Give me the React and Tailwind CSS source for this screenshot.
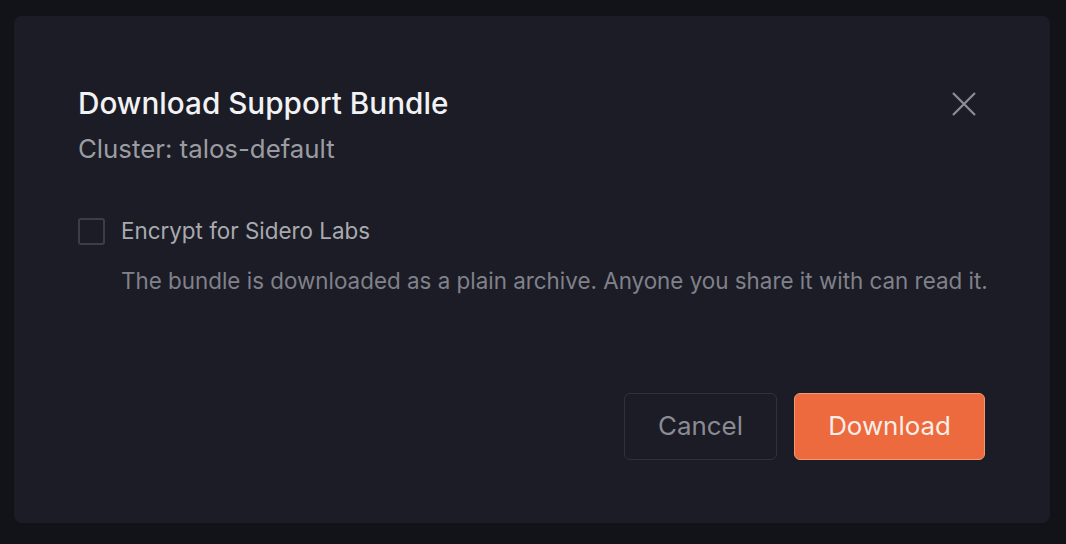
import React, { useState } from 'react';

const App = () => {
  const [encrypt, setEncrypt] = useState(false);

  return (
    <div
      className="w-[1066px] h-[544px] bg-[#121319] pt-[16px] pl-[14px] pr-[16px] pb-[21px]"
      style={{ fontFamily: 'Inter, "Noto Sans", sans-serif' }}
    >
      <div className="h-full rounded-[8px] bg-[#1b1c25] pl-[64px] pr-[64px] pt-[69px] flex flex-col">
        {/* Header */}
        <div className="flex items-start justify-between">
          <div className="flex flex-col">
            <h2 className="text-[29.7px] leading-[36px] font-medium text-[#f2f2f4]">Download Support Bundle</h2>
            <p className="text-[25.8px] leading-[32px] text-[#9b9ca3] mt-[12px]">Cluster: talos-default</p>
          </div>
          <button className="mt-[7px] mr-[10px] w-[24px] h-[24px] text-[#8d8e95]">
            <svg width="24" height="24" viewBox="0 0 24 24" fill="none" stroke="currentColor" strokeWidth="2.2">
              <path d="M1 1L23 23M23 1L1 23" />
            </svg>
          </button>
        </div>

        {/* Option */}
        <div className="mt-[52px] flex items-center gap-[16px]">
          <button
            onClick={() => setEncrypt(!encrypt)}
            className="w-[27px] h-[27px] rounded-[3px] border-[2px] border-[#3c3d46] bg-transparent"
          />
          <span className="text-[22.4px] leading-[28px] text-[#a9aab0]">Encrypt for Sidero Labs</span>
        </div>
        <p className="ml-[43px] mt-[21px] whitespace-nowrap text-[22.4px] leading-[30px] text-[#80818a]">
          The bundle is downloaded as a plain archive. Anyone you share it with can read it.
        </p>

        {/* Actions */}
        <div className="mt-[97px] flex justify-end gap-[17px] pr-[1px]">
          <button className="w-[153px] h-[67px] rounded-[6px] border border-[#30313a] text-[25.9px] text-[#8a8b93]">
            Cancel
          </button>
          <button className="w-[191px] h-[67px] rounded-[6px] border border-[#f39a73] bg-[#ec6a3e] text-[25.9px] text-[#fbeee8]">
            Download
          </button>
        </div>
      </div>
    </div>
  );
};

export default App;
